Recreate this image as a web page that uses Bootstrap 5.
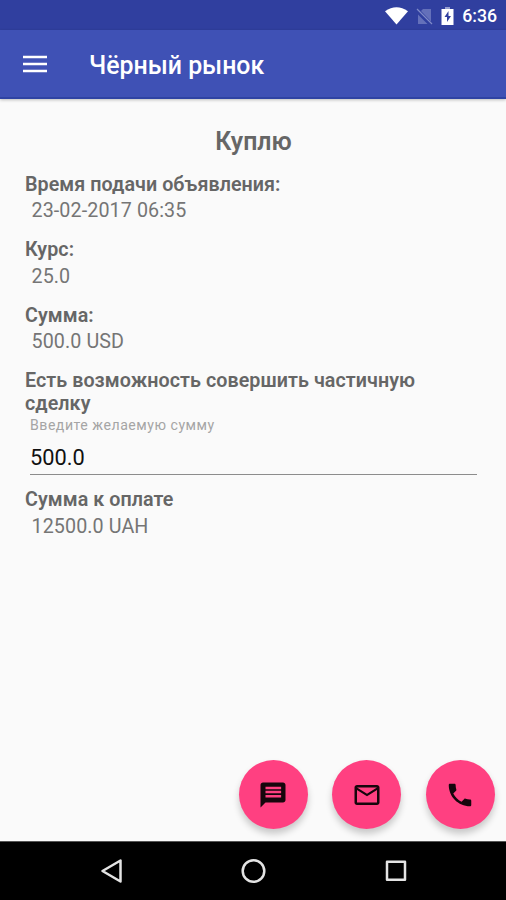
<!DOCTYPE html>
<html lang="ru">
<head>
<meta charset="utf-8">
<meta name="viewport" content="width=device-width, initial-scale=1">
<title>Чёрный рынок</title>
<link href="https://cdn.jsdelivr.net/npm/bootstrap@5.3.0/dist/css/bootstrap.min.css" rel="stylesheet">
<style>
body{font-family:Roboto,"Noto Sans",sans-serif;background:#fafafa;color:#666;font-size:19.7px;line-height:23px;overflow:hidden}
svg{display:block;flex:none}
.status-bar{height:30px;background:#303f9f;padding:1px 9px 0 0;font-size:17.7px;font-weight:500}
.clock{padding-top:2px}
.app-bar{height:69px;background:#3f51b5;padding:1px 23px 0;border-bottom:2px solid #2f43a3;box-shadow:0 1px 3px rgba(0,0,0,.25)}
.app-title{font-size:24.9px;font-weight:500;line-height:30px;padding-top:3px;margin-left:42px}
.offer{padding:28px 25px 0}
.offer-type{font-size:24.9px;line-height:30px;font-weight:600;margin:0 0 15.5px;padding-left:1px}
.offer dl{margin:0}
.offer dt{font-weight:600;letter-spacing:.06px}
.offer dd{margin:3.5px 0 16px 6.5px;color:#757575;letter-spacing:.1px}
.hint{font-size:14.1px;line-height:17px;color:#a5a5a5;margin-left:5px;padding-top:2px;letter-spacing:.52px}
.amount{font-size:21.8px;line-height:27px;color:#111;padding:0 0 3px;border-bottom:1.5px solid #8c8c8c!important;margin:10px 4px 13px 5px;width:447px;background:none;outline:0}
.actions{gap:24.5px;padding:0 11.5px 12px 0}
.fab{width:69px;height:69px;background:#ff4081;color:#16060c;box-shadow:0 5px 7px rgba(0,0,0,.2)}
.nav-keys{height:59px;background:#000;border-top:1px solid #555}
</style>
<script src="https://cdn.jsdelivr.net/npm/bootstrap@5.3.0/dist/js/bootstrap.bundle.min.js"></script>
</head>
<body class="d-flex flex-column vh-100">
<div class="status-bar d-flex align-items-center justify-content-end text-white">
  <svg width="23" height="18" viewBox="0 0 23 18"><path fill="#fff" d="M0 4.300Q11.500-4 23 4.300L11.500 17.500Z"/></svg>
  <svg class="ms-2" width="17" height="18" viewBox="0 0 17 18"><path fill="#6470ba" d="M7 2h8v12.500L5 4ZM2 7.500 11.500 17H2Z"/><path stroke="#7f8ac8" stroke-width="1.300" d="M1 2 16 17"/></svg>
  <svg class="ms-2" width="13" height="18" viewBox="0 0 13 18"><path fill="#fff" d="M4 2h5v0h3.500v16H.5V2Z"/><path fill="#98a0d0" d="M4 0h5v2H4Z"/><path fill="#303f9f" d="M7.500 4 3.500 10H6v5l4-6H7.500Z"/></svg>
  <span class="clock ms-2">6:36</span>
</div>
<header class="app-bar d-flex align-items-center text-white">
  <svg width="24" height="18" viewBox="0 0 24 18"><path stroke="#fff" stroke-width="2.700" d="M0 2h24M0 9h24M0 16h24"/></svg>
  <span class="app-title">Чёрный рынок</span>
</header>
<main class="offer flex-grow-1">
  <h1 class="offer-type text-center">Куплю</h1>
  <dl>
    <dt>Время подачи объявления:</dt><dd>23-02-2017 06:35</dd>
    <dt>Курс:</dt><dd>25.0</dd>
    <dt>Сумма:</dt><dd>500.0 USD</dd>
    <dt>Есть возможность совершить частичную сделку</dt>
  </dl>
  <label class="hint d-block" for="amount">Введите желаемую сумму</label>
  <input class="amount border-0 d-block" id="amount" value="500.0">
  <dl><dt>Сумма к оплате</dt><dd>12500.0 UAH</dd></dl>
</main>
<div class="actions d-flex justify-content-end">
  <button class="fab btn p-0 border-0 rounded-circle d-flex align-items-center justify-content-center" aria-label="SMS"><svg width="30" height="30" viewBox="0 0 24 24"><path fill="currentColor" d="M20 2H4c-1.100 0-2 .9-2 2v18l4-4h14c1.100 0 2-.9 2-2V4c0-1.100-.9-2-2-2z"/><path fill="#ff4081" d="M6 5.300h12.500v2H6zM6 8.600h12.500v2H6zM6 11.900h12.500v2H6z"/></svg></button>
  <button class="fab btn p-0 border-0 rounded-circle d-flex align-items-center justify-content-center" aria-label="Email"><svg width="30" height="30" viewBox="0 0 24 24"><path fill="currentColor" d="M20 4H4c-1.100 0-2 .9-2 2v12c0 1.100.9 2 2 2h16c1.100 0 2-.9 2-2V6c0-1.100-.9-2-2-2zm0 14H4V8l8 5 8-5v10zm-8-7L4 6h16l-8 5z"/></svg></button>
  <button class="fab btn p-0 border-0 rounded-circle d-flex align-items-center justify-content-center" aria-label="Позвонить"><svg width="30" height="30" viewBox="0 0 24 24"><path fill="currentColor" d="M6.620 10.790c1.440 2.830 3.760 5.140 6.590 6.590l2.200-2.200c.27-.27.67-.36 1.020-.24 1.120.37 2.330.57 3.570.57.55 0 1 .45 1 1V20c0 .55-.45 1-1 1-9.390 0-17-7.610-17-17 0-.55.45-1 1-1h3.500c.55 0 1 .45 1 1 0 1.250.2 2.450.57 3.570.11.35.03.74-.25 1.020l-2.200 2.200z"/></svg></button>
</div>
<nav class="nav-keys d-flex align-items-center justify-content-center">
  <svg width="308" height="26" viewBox="0 0 308 26" fill="none" stroke="#e4e4e4" stroke-width="2.500" stroke-linejoin="round"><path d="M21.500 2.500v21L3.500 13Z"/><circle cx="154.500" cy="13" r="10.800"/><rect x="288" y="3.700" width="18" height="18"/></svg>
</nav>
</body>
</html>
